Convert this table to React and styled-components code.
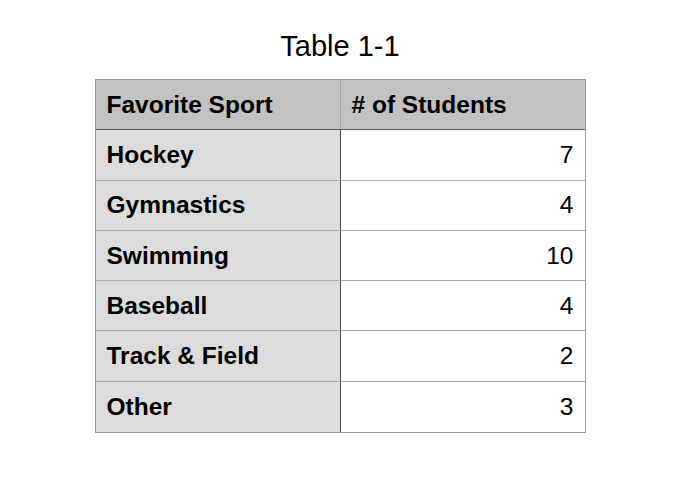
import React from 'react';
import styled, { createGlobalStyle } from 'styled-components';

const GlobalStyle = createGlobalStyle`
	html, body {
		margin: 0;
		padding: 0;
		background: #fff;
	}
	body {
		font-family: "Liberation Sans", Arial, Helvetica, sans-serif;
		color: #000;
	}
`;

const Page = styled.div`
	width: 692px;
	height: 490px;
	display: flex;
	flex-direction: column;
	align-items: center;
	padding-top: 28px;
	box-sizing: border-box;
`;

const Title = styled.div`
	font-size: 29px;
	line-height: 36px;
	margin-left: -12px;
	margin-bottom: 15px;
`;

const Grid = styled.div`
	display: grid;
	grid-template-columns: 245px 244px;
	grid-auto-rows: 50.3px;
	margin-left: -12px;
	border: 1px solid #9c9c9c;
`;

const Cell = styled.div`
	display: flex;
	align-items: center;
	justify-content: ${(p) => (p.$num ? 'flex-end' : 'flex-start')};
	padding: ${(p) => (p.$num ? '0 11px 0 0' : '0 0 0 11px')};
	font-size: 24.5px;
	font-weight: ${(p) => (p.$num ? 400 : 700)};
	background: ${(p) => (p.$head ? '#c1c2c1' : p.$num ? '#ffffff' : '#dcdcdc')};
	border-bottom: 1px solid ${(p) => (p.$head ? '#5a5a5a' : '#a8a8a8')};
	border-right: ${(p) => (p.$right ? 'none' : p.$head ? '1px solid #a8a8a8' : '1px solid #4a4a4a')};
	box-sizing: border-box;
	${(p) => p.$last && 'border-bottom: none;'}
`;

const rows = [
	['Hockey', 7],
	['Gymnastics', 4],
	['Swimming', 10],
	['Baseball', 4],
	['Track & Field', 2],
	['Other', 3],
];

export default function App() {
	return (
		<>
			<GlobalStyle />
			<Page>
				<Title>Table 1-1</Title>
				<Grid>
					<Cell $head>Favorite Sport</Cell>
					<Cell $head $right>
						# of Students
					</Cell>
					{rows.map(([sport, count], i) => (
						<React.Fragment key={sport}>
							<Cell $last={i === rows.length - 1}>{sport}</Cell>
							<Cell $num $right $last={i === rows.length - 1}>
								{count}
							</Cell>
						</React.Fragment>
					))}
				</Grid>
			</Page>
		</>
	);
}
